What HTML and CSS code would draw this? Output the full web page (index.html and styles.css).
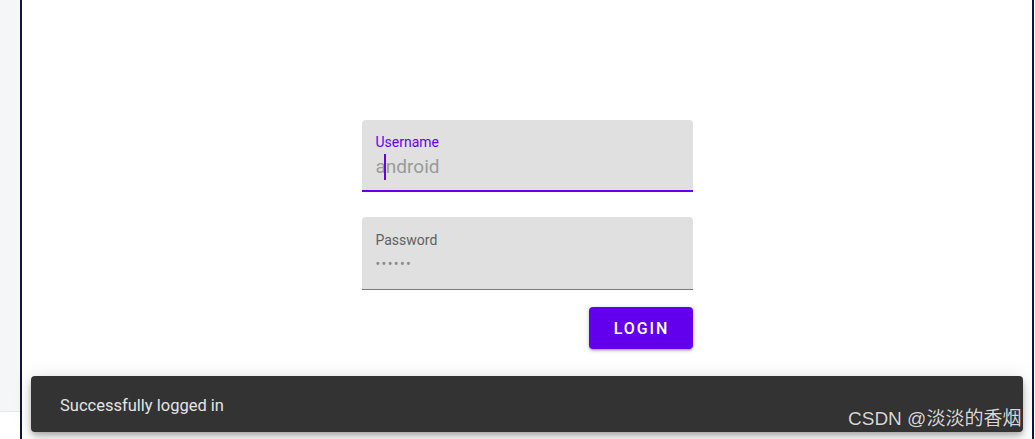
FILE: index.html
```html
<!DOCTYPE html>
<html lang="en">
<head>
<meta charset="utf-8">
<title>Login</title>
<link rel="stylesheet" href="styles.css">
</head>
<body>
<div class="frame">
  <aside class="side">
    <div class="side-top"></div>
    <div class="side-bottom"></div>
  </aside>
  <main class="screen">
    <form class="login">
      <div class="field focused">
        <span class="label">Username</span>
        <span class="value">a<span class="caret"></span>ndroid</span>
      </div>
      <div class="field">
        <span class="label">Password</span>
        <span class="value dots">••••••</span>
      </div>
      <div class="actions">
        <button type="button" class="btn">LOGIN</button>
      </div>
    </form>
  </main>
  <div class="edge"></div>
</div>
<div class="snackbar">Successfully logged in</div>
<div class="watermark">CSDN @淡淡的香烟</div>
</body>
</html>
```
FILE: styles.css
```css
html, body {
  margin: 0;
  padding: 0;
  height: 100%;
  overflow: hidden;
  background: #ffffff;
  font-family: Roboto, "Liberation Sans", Arial, sans-serif;
}

.frame {
  display: flex;
  height: 439px;
}

.side {
  width: 20px;
  display: flex;
  flex-direction: column;
}

.side-top {
  height: 411px;
  background: #f5f6f8;
  border-bottom: 1px solid #e4e6ea;
}

.side-bottom {
  flex: 1;
  background: #ffffff;
}

.screen {
  width: 1010px;
  border-left: 2px solid #121538;
  border-right: 2px solid #121538;
  background: #ffffff;
  display: flex;
  justify-content: center;
  padding-top: 120px;
  box-sizing: content-box;
}

.edge {
  flex: 1;
  background: #ffffff;
}

.login {
  width: 331px;
  display: flex;
  flex-direction: column;
}

.field {
  background: #e0e0e0;
  border-radius: 4px 4px 0 0;
  border-bottom: 1px solid #7a7a7a;
  height: 73px;
  box-sizing: border-box;
  padding: 13px 14px 0 14px;
  display: flex;
  flex-direction: column;
}

.field.focused {
  height: 72px;
  padding-top: 12px;
  border-bottom: 2px solid #6200ee;
  margin-bottom: 25px;
}

.label {
  font-size: 14px;
  line-height: 20px;
  color: #5f5f5f;
}

.focused .label {
  color: #6200ee;
}

.value {
  margin-top: 2px;
  font-size: 19px;
  line-height: 26px;
  color: #9a9a9a;
  white-space: nowrap;
}

.caret {
  display: inline-block;
  width: 2px;
  height: 26px;
  margin: 0 -1px;
  background: #6200ee;
  vertical-align: top;
  position: relative;
  left: -1px;
}

.dots {
  font-size: 14px;
  letter-spacing: 1.4px;
  line-height: 26px;
  margin-top: 1px;
  color: #8a8a8a;
}

.actions {
  display: flex;
  justify-content: flex-end;
  margin-top: 17px;
}

.btn {
  width: 104px;
  height: 42px;
  border: 0;
  border-radius: 4px;
  background: #6200ee;
  color: #ffffff;
  font-family: Roboto, "Liberation Sans", Arial, sans-serif;
  font-size: 16px;
  font-weight: 500;
  letter-spacing: 1.9px;
  padding: 0 0 0 2px;
  box-shadow: 0 2px 2px rgba(0,0,0,0.14), 0 3px 1px -2px rgba(0,0,0,0.12), 0 1px 5px rgba(0,0,0,0.2);
}

.snackbar {
  position: absolute;
  left: 31px;
  top: 376px;
  width: 992px;
  height: 56px;
  box-sizing: border-box;
  padding: 2px 29px 0;
  display: flex;
  align-items: center;
  background: #333333;
  border-radius: 4px;
  color: #e4e4e4;
  font-size: 16.5px;
  box-shadow: 0 3px 5px -1px rgba(0,0,0,0.2), 0 6px 10px 0 rgba(0,0,0,0.14), 0 1px 18px 0 rgba(0,0,0,0.12);
}

.watermark {
  position: absolute;
  left: 848px;
  top: 406px;
  font-family: "Liberation Sans", "Noto Sans CJK SC", sans-serif;
  font-size: 19px;
  line-height: 25px;
  color: #d8d8d8;
  text-shadow: 0 0 1px rgba(0,0,0,0.6);
  white-space: nowrap;
}
```
